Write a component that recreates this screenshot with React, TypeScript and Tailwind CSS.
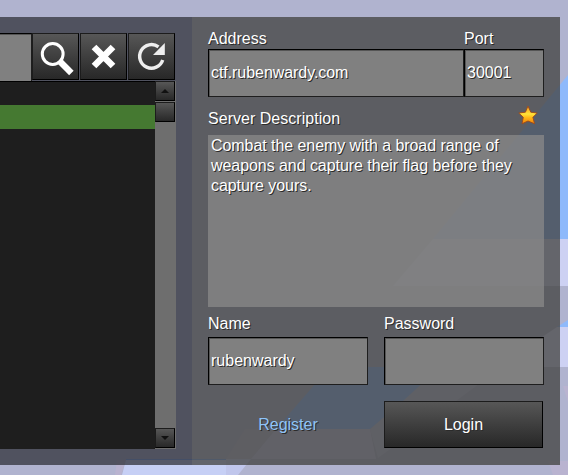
import React from "react";

const shade = "[text-shadow:1px_1px_0_#2b2b2b]";
const field =
  "border border-t-black border-l-black border-r-[#1e1e1e] border-b-[#1e1e1e] bg-[#808080] shadow-[inset_1px_1px_0_#555] flex items-center pl-[2px]";
const button =
  "border border-t-[#1c1c1c] border-l-[#1c1c1c] border-r-black border-b-black bg-linear-to-b from-[#575757] to-[#282828] flex items-center justify-center shrink-0";

function Sky() {
  return (
    <svg className="absolute inset-0" width="568" height="475" viewBox="0 0 568 475">
      <rect width="568" height="475" fill="#b0b3cf" />
      <path d="M568 75L433 239H568Z" fill="#8eb9fb" />
      <path d="M433 239H568V286H393Z" fill="#cdd1f3" />
      <path d="M568 320L557 327H568Z" fill="#8eb9fb" />
      <path d="M557 327H568V367H502L530 345Z" fill="#cdd1f3" />
      <path d="M440 367H502L456 401L378 458L370 429Z" fill="#bdbfda" />
      <path d="M330 367H440L403 401L370 429H276Z" fill="#8eb9fb" />
      <path d="M245 429H276L251 459H226Z" fill="#b8b6d0" />
      <path d="M276 429H370L376 459H251Z" fill="#c4c4e2" />
      <path d="M117 460H126L121 475H115Z" fill="#b9b3d0" />
      <path d="M126 460H226V475H122Z" fill="#c6cff5" />
      <path d="M126 459H226V460H126Z" fill="#7fa9f0" />
      <path d="M226 459H251L238 475H226Z" fill="#c0c6ec" />
      <path d="M563 386H568V402Z M548 461H568V475H553Z" fill="#b9b3d0" />
    </svg>
  );
}

function Star() {
  return (
    <svg width="20" height="20" viewBox="0 0 20 20" className="mr-[6px] -mt-px">
      <defs>
        <linearGradient id="gold" x1="0" y1="0" x2="0" y2="1">
          <stop offset="0" stopColor="#f39418" />
          <stop offset=".45" stopColor="#ffe43a" />
          <stop offset=".65" stopColor="#ffb818" />
          <stop offset="1" stopColor="#f08008" />
        </linearGradient>
      </defs>
      <path d="M10 1L12.8 7.2L19.2 8L14.9 12.3L16.6 18.8L10 16L4 18.8L5.3 12.3L.8 8L7.4 7.2Z" fill="url(#gold)" stroke="#9c4a1c" strokeWidth=".9" />
    </svg>
  );
}

export default function App() {
  return (
    <div className="relative w-[568px] h-[475px] overflow-hidden font-['Liberation_Sans',Arial,sans-serif] text-[16px] leading-5 text-white">
      <Sky />
      <div className="relative flex pt-[17px] h-[465px]">
        <section className="w-[192px] bg-[#30313a]/75 pt-4">
          <div className="flex h-[48px]">
            <div className="w-8 h-[48px] bg-[#808080] border-t border-r border-t-black border-r-[#1e1e1e] shadow-[inset_0_1px_0_#555]" />
            <div className="flex gap-px">
              <div className={button + " w-[47px] h-[47px]"}>
                <svg width="45" height="45" viewBox="0 0 45 45" fill="none" stroke="#fff">
                  <circle cx="19.7" cy="20" r="10.4" strokeWidth="3" />
                  <path d="M26 26.6L38.4 38.9" strokeWidth="6.4" />
                </svg>
              </div>
              <div className={button + " w-[47px] h-[47px]"}>
                <svg width="45" height="45" viewBox="0 0 45 45" stroke="#fff" strokeWidth="6.6">
                  <path d="M13 13L32 32M32 13L13 32" />
                </svg>
              </div>
              <div className={button + " w-[47px] h-[47px]"}>
                <svg width="45" height="45" viewBox="0 0 45 45" fill="none">
                  <path d="M29.5 12.9A11.8 11.8 0 1 0 33.7 26" stroke="#eee" strokeWidth="3.4" />
                  <path d="M35.8 9V21H24Z" fill="#eee" />
                </svg>
              </div>
            </div>
          </div>
          <div className="flex w-[176px] h-[368px]">
            <div className="w-[155px] bg-[#1e1e1e] border-t border-black pt-[23px]">
              <div className="h-6 bg-[#457931]" />
            </div>
            <div className="w-[21px] bg-[#6e6e6e] flex flex-col justify-between pb-px pr-px">
              <div className="flex flex-col gap-px">
                <div className={button + " w-5 h-5"}>
                  <svg width="8" height="4"><path d="M4 0L8 4H0Z" fill="#111" /></svg>
                </div>
                <div className={button + " w-5 h-5"} />
              </div>
              <div className={button + " w-5 h-5"}>
                <svg width="8" height="4"><path d="M0 0H8L4 4Z" fill="#111" /></svg>
              </div>
            </div>
          </div>
        </section>
        <section className={"w-[368px] bg-[#40403d]/75 px-4 pt-3 flex flex-col " + shade}>
          <div className="flex h-5">
            <div className="w-[256px]">Address</div>
            <div>Port</div>
          </div>
          <div className="flex h-[48px]">
            <div className={field + " w-[256px] tracking-[-0.06px]"}>ctf.rubenwardy.com</div>
            <div className={field + " w-[80px]"}>30001</div>
          </div>
          <div className="flex justify-between h-[38px] pt-[9px]">
            <div className="pt-[3px] tracking-[0.03px]">Server Description</div>
            <Star />
          </div>
          <div className="h-[172px] bg-[#898989]/75 pl-[3px] pt-px pr-4 tracking-[-0.06px]">
            Combat the enemy with a broad range of weapons and capture their flag before they capture yours.
          </div>
          <div className="flex gap-4 pt-[7px]">
            <div className="w-[160px]">Name<div className={field + " h-[48px] mt-[3px]"}>rubenwardy</div></div>
            <div className="w-[160px]">Password<div className={field + " h-[48px] mt-[3px]"} /></div>
          </div>
          <div className="flex gap-4 pt-4">
            <div className="w-[160px] h-[47px] flex items-center justify-center text-[#8fc4f8]">Register</div>
            <div className={button + " w-[159px] h-[47px]"}>Login</div>
          </div>
        </section>
      </div>
    </div>
  );
}
